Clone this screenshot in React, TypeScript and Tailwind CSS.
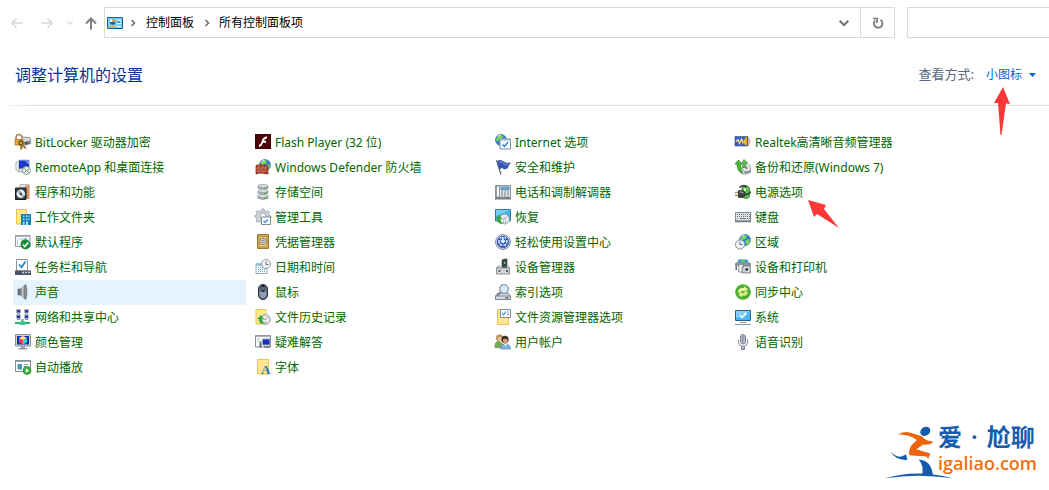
import type { ReactNode } from "react";

type Item = { name: string; icon: ReactNode; active?: boolean; marked?: boolean };

const folder = (
  <>
    <path d="M1 .5h10v14.500H1z" fill="#ffe794" stroke="#eec24c" />
  </>
);

const globe = (
  <>
    <circle cx="10" cy="6" r="5.500" fill="#2f7fd0" stroke="#2560a4" strokeWidth=".6" />
    <path d="M6 3l4-2.300 2 1.600-1 2.500-3 .7-1 2.500-2-2zM11 6l4-1-.6 4L12 11l-2-2.500z" fill="#7bd35a" />
    <path d="M7 2.500l2.500-1.300" stroke="#e8fbff" strokeWidth="1" />
  </>
);

const items: Item[] = [
  {
    name: "BitLocker 驱动器加密",
    icon: (
      <>
        <path d="M1 6V3.500a3 3 0 0 1 6 0V6" fill="none" stroke="#b08a42" strokeWidth="1.600" />
        <path d="M7 3l8 .5 1 6-7 2-3-2z" fill="#d5d5d5" stroke="#777" strokeWidth=".7" />
        <path d="M9 8l6-1v2.500l-5 1.500z" fill="#555" />
        <path d="M13 8.500h1.500" stroke="#5df060" />
        <path d="M0 5.500h8v5.500H0z" fill="#e1a93c" stroke="#a06c1c" strokeWidth=".7" />
        <circle cx="6" cy="9" r="2" fill="none" stroke="#77531d" strokeWidth="1.500" />
        <path d="M6 11v4.500M7 10.500l4 4M6 13.500h2" stroke="#97671e" strokeWidth="1.500" />
      </>
    ),
  },
  {
    name: "Flash Player (32 位)",
    icon: (
      <>
        <path d="M0 0h16v15H0z" fill="#4a0204" />
        <path d="M12 3.500c-3 0-4 2-4.700 4.500C6.500 10.500 6 12 4 12M7.500 7.800H11" fill="none" stroke="#fff" strokeWidth="1.900" />
      </>
    ),
  },
  {
    name: "Internet 选项",
    icon: (
      <>
        <g transform="translate(-4 0)">{globe}</g>
        <path d="M5 5h10.500v10H5z" fill="#f8fbff" stroke="#7990a8" />
        <path d="M5 5.500h10.500" stroke="#9cb0c4" strokeWidth="2" />
        <path d="M7.500 10.500l2 2 3.500-4.500" fill="none" stroke="#2f7fd0" strokeWidth="1.400" />
      </>
    ),
  },
  {
    name: "Realtek高清晰音频管理器",
    icon: (
      <>
        <path d="M0 2.500h13v9.500H0z" fill="#3f5fc0" stroke="#2b4696" strokeWidth=".6" />
        <path d="M1 7.500l2-2 1.500 4L6.500 5 8 9l2-3" fill="none" stroke="#ffe98a" strokeWidth="1.200" />
        <path d="M8.500 6l3.500-3.500v9.500L8.500 9.500z" fill="#f0b644" stroke="#a8711e" strokeWidth=".6" />
        <path d="M13.500 4.500q2.500 3 0 6" fill="none" stroke="#eaa93a" strokeWidth="1.200" />
      </>
    ),
  },
  {
    name: "RemoteApp 和桌面连接",
    icon: (
      <>
        <path d="M1 3h4v8H1z" fill="#f2f2f2" stroke="#a5a5a5" strokeWidth=".8" />
        <path d="M3.500 1h11v9h-11z" fill="#1c35cf" stroke="#c5c5cc" />
        <path d="M9 1.500h5v4z" fill="#6d92f2" />
        <path d="M3 11.500h7v2H2z" fill="#bbb" />
        <circle cx="11.500" cy="11.500" r="4" fill="#eef1f3" stroke="#8d979f" />
        <path d="M9.500 9.500l2 2-2 2M13.500 9.500l-1.500 2 1.500 2" fill="none" stroke="#48a543" />
      </>
    ),
  },
  {
    name: "Windows Defender 防火墙",
    icon: (
      <>
        {globe}
        <path d="M1 6.500l4-1 8 1.500v8l-8-1-4 1z" fill="#a8402c" stroke="#6d2416" strokeWidth=".7" />
        <path d="M1 9h12M1 12h12M4 6v3M8 6v3M11 6.500V9M3 9v3M6 9v3M10 9v3M4 12v3M8 12v3" stroke="#dd8e76" strokeWidth=".6" />
      </>
    ),
  },
  {
    name: "安全和维护",
    icon: (
      <>
        <path d="M1.500 1l4.500 14.500" stroke="#6c7684" strokeWidth="1.400" />
        <path d="M2.500 2.500Q5 0 8 2.500T15.500 4Q13 6 12.500 9 9 11 7 8.500L4.500 10z" fill="#3455b8" stroke="#1f3b91" strokeWidth=".6" />
        <path d="M3.500 3.500Q6 1.500 8 4t5 1" fill="none" stroke="#839ee5" />
      </>
    ),
  },
  {
    name: "备份和还原(Windows 7)",
    icon: (
      <>
        <path d="M6 9l7-1.500 2.500 2v4L9 15.500 5.500 13z" fill="#d5d8da" stroke="#777d82" strokeWidth=".7" />
        <ellipse cx="11.500" cy="9" rx="4" ry="4.300" fill="#e6e9ea" stroke="#858b90" strokeWidth=".7" />
        <circle cx="11.500" cy="9" r="1.300" fill="#8a9298" />
        <path d="M9.500 13.500l5-1" stroke="#5c6368" strokeWidth="1.200" />
        <path d="M8 8.500q-1-2 0-4H6.500L9 .5l3.500 3.500H11q-1 2 0 4.500z" fill="#5cc248" stroke="#227d22" strokeWidth=".6" />
        <path d="M2 5H0L3.500 1 7 5H5.500q-.5 5 2 9.500Q2 12.500 2 5z" fill="#49b838" stroke="#1f7a20" strokeWidth=".7" />
      </>
    ),
  },
  {
    name: "程序和功能",
    icon: (
      <>
        <path d="M5 .5h9v11H4z" fill="#dedede" stroke="#aaa" strokeWidth=".8" />
        <path d="M10 2l4.500-1v14H11z" fill="#d79666" />
        <path d="M.5 4h10.500v11.500H.5z" fill="#353e45" stroke="#151c22" />
        <circle cx="5.800" cy="9.800" r="4.300" fill="#e6edf0" />
        <path d="M5.800 9.800L2 8q1-2 3-2.400zM5.800 9.800l4 1.500q-1 2-3 2.500z" fill="#a4b3bc" />
        <circle cx="5.800" cy="9.800" r="1.300" fill="#323a40" />
      </>
    ),
  },
  {
    name: "存储空间",
    icon: (
      <g fill="#b9bec2" stroke="#82888d" strokeWidth=".7">
        <path d="M3 12v2.300q5 2.300 10 0V12zM3 7v2.300q5 2.300 10 0V7zM3 2v2.300q5 2.300 10 0V2z" />
        <ellipse cx="8" cy="12" rx="5" ry="1.400" fill="#e8eaeb" />
        <ellipse cx="8" cy="7" rx="5" ry="1.400" fill="#e8eaeb" />
        <ellipse cx="8" cy="2" rx="5" ry="1.400" fill="#e8eaeb" />
        <path d="M9.500 4.400h2M9.500 9.400h2M9.500 14.400h2" stroke="#35ad38" strokeWidth="1.300" />
      </g>
    ),
  },
  {
    name: "电话和调制解调器",
    icon: (
      <>
        <path d="M.5 1.500h15v12H.5z" fill="#e3e7ea" stroke="#8a929a" />
        <path d="M1.500 2h3v11h-3z" fill="#fafafa" stroke="#7a838c" strokeWidth=".8" />
        <path d="M6 3h8v3H6z" fill="#6fb0de" stroke="#3b678d" strokeWidth=".6" />
        <path d="M6 8h8M6 10h8M6 12h8" stroke="#75808b" strokeDasharray="2 1" />
        <path d="M0 13.500h16v2H0z" fill="#737d87" />
      </>
    ),
  },
  {
    name: "电源选项",
    marked: true,
    icon: (
      <>
        <path d="M8.500 1.500h3.500v1q2.500.3 2.500 2v7.500q0 2-3.500 2.500-4-.5-4-2.500v-7.500q0-1.700 1.500-2z" fill="#5fc04f" stroke="#2b7a2a" strokeWidth=".8" />
        <path d="M9 4h2v3H9z" fill="#d9f6cd" />
        <path d="M4.500 3.500Q8 0 11.500 3.500M11 10.500q3.500 0 4.500-3" fill="none" stroke="#2f3633" strokeWidth="1.400" />
        <path d="M0 8.500h4M0 11.500h4" stroke="#a08e62" strokeWidth="1.300" />
        <path d="M3.500 6.500H7q3.500 1 3.500 3.500T7 13.500H3.500z" fill="#3b4144" stroke="#16191b" strokeWidth=".6" />
        <path d="M4.500 8H7l1.500 1.200" fill="none" stroke="#c5cacc" />
      </>
    ),
  },
  {
    name: "工作文件夹",
    icon: (
      <>
        <path d="M1.500.5h10v14.500h-10z" fill="#ffe794" stroke="#eec24c" />
        <path d="M6 5h10v11H6z" fill="#1681b8" />
        <path d="M8 6.500h1.500V8H8zM11 6.500h1.500V8H11zM13.500 6.500h1V8h-1zM8 9.500h1.500V11H8zM11 9.500h1.500V11H11zM13.500 9.500h1V11h-1zM8 12.500h1.500V16H8zM11 12.500h2V16h-2z" fill="#a8e3fb" />
      </>
    ),
  },
  {
    name: "管理工具",
    icon: (
      <>
        <path d="M7 0h2l.5 2 2 .7L13 1.500 14.500 3l-1 1.500.7 2 1.800.5v2l-2 .5-2 3-4 2.500H6.500l-.5-2-2-.7-1.500 1L1 12l1-1.700-.7-1.800L0 8V6.500L1.500 6l.7-2-1-1.500 1.500-1L4 2.500 6.500 2z" fill="#cfd4d8" stroke="#8a939a" strokeWidth=".7" />
        <circle cx="8" cy="7" r="3" fill="#fff" stroke="#8c949b" strokeWidth=".8" />
        <path d="M6.500 8h9v7.500h-9z" fill="#fff" stroke="#808890" />
        <path d="M8.500 12l1.500 1.500 3-3" fill="none" stroke="#2f87cf" strokeWidth="1.200" />
      </>
    ),
  },
  {
    name: "恢复",
    icon: (
      <>
        <path d="M.5.5h15V12H.5z" fill="#76cdf7" stroke="#277cae" />
        <path d="M1 7l14-6v10H1z" fill="#48b1ec" />
        <circle cx="9.500" cy="10" r="5" fill="#e7eaec" stroke="#818a90" strokeWidth=".8" />
        <path d="M9.500 10l3-3M9.500 10h-3M8 13h3" stroke="#626b72" strokeDasharray="1 1" />
        <path d="M6.500 15Q1.500 14 2 9.500H.5L4 6l3 3.500H5.500q-.5 3.500 3 5.500z" fill="#35a33c" />
      </>
    ),
  },
  {
    name: "键盘",
    icon: (
      <>
        <path d="M.5 3.500h15v8.500H.5z" fill="#dfe2e4" stroke="#858c94" />
        <path d="M0 12.500h16" stroke="#6f7780" strokeWidth="1.500" />
        <path d="M2 5.500h13M2 7.500h13M2 9.500h2M12 9.500h3" stroke="#6f7780" strokeDasharray="1 1" />
        <path d="M5 9.500h6" stroke="#6f7780" />
      </>
    ),
  },
  {
    name: "默认程序",
    icon: (
      <>
        <path d="M.5 1.500h14.500v11H.5z" fill="#fff" stroke="#8c949b" />
        <path d="M.5 2h14.500" stroke="#9ba2a8" strokeWidth="1.500" />
        <path d="M2.500 5v6M4 5h4" stroke="#a8cce2" />
        <path d="M6 8l5-4v3" fill="none" stroke="#4f9bd0" />
        <circle cx="10.500" cy="10.500" r="5" fill="#168a38" />
        <path d="M7.800 10.500l2 2 3.500-4" fill="none" stroke="#fff" strokeWidth="1.600" />
      </>
    ),
  },
  {
    name: "凭据管理器",
    icon: (
      <>
        <path d="M2.500.5h11v14h-11z" fill="#d0a955" stroke="#9b7830" />
        <path d="M4 2.500h8V13H4z" fill="#e5ca85" stroke="#b38a3a" strokeWidth=".8" />
        <circle cx="8" cy="7.500" r="3.200" fill="#efece0" stroke="#766543" strokeWidth=".8" />
        <circle cx="8" cy="7.500" r="1.400" fill="none" stroke="#66604f" strokeWidth=".8" />
      </>
    ),
  },
  {
    name: "轻松使用设置中心",
    icon: (
      <>
        <circle cx="8" cy="8" r="7.400" fill="#dbe4ef" stroke="#7886a2" />
        <circle cx="8" cy="8" r="5.800" fill="#2d5ec4" stroke="#1c3f9c" strokeWidth=".6" />
        <path d="M4 6Q4 11.500 8 11.500T12 6" fill="none" stroke="#fff" strokeWidth="1.300" strokeDasharray="3 1" />
        <path d="M8 3v5M6 6.500L8 8.500l2-2M5 4h1.500M9.500 4H11" fill="none" stroke="#fff" strokeWidth="1.400" />
      </>
    ),
  },
  {
    name: "区域",
    icon: (
      <>
        {globe}
        <circle cx="5" cy="10.500" r="4.600" fill="#edf3f7" stroke="#84939f" />
        <path d="M5 7.500v3h2.500" fill="none" stroke="#50687a" />
      </>
    ),
  },
  {
    name: "任务栏和导航",
    icon: (
      <>
        <path d="M1.500.5h11V12h-11z" fill="#fff" stroke="#8894a2" />
        <path d="M4 5.500l2.500 3 4-6" fill="none" stroke="#1683cf" strokeWidth="1.600" />
        <path d="M0 11.500h16V16H0z" fill="#4a5668" />
        <path d="M7 13.500h8" stroke="#c7d1da" strokeWidth="1.500" strokeDasharray="2 1" />
      </>
    ),
  },
  {
    name: "日期和时间",
    icon: (
      <>
        <path d="M1 5h11v9.500H1z" fill="#f6fbfd" stroke="#9aaab4" />
        <path d="M1 5.500h11" stroke="#8dbfcd" strokeWidth="2.500" />
        <path d="M3 8.500h8M3 10.500h8M3 12.500h8" stroke="#6badc2" strokeDasharray="1 1" />
        <circle cx="11" cy="5" r="4.500" fill="#f0f2f3" stroke="#919aa0" />
        <path d="M11 2.500V5.500h2.500" fill="none" stroke="#606d77" />
      </>
    ),
  },
  {
    name: "设备管理器",
    icon: (
      <>
        <path d="M7 1l3-1h2v9H7z" fill="#3f484c" stroke="#252b2e" strokeWidth=".6" />
        <path d="M9 3h1.500v2H9z" fill="#50dc58" />
        <path d="M3 7h10l1.500 2h-13z" fill="#eef0f1" stroke="#858b8f" strokeWidth=".7" />
        <path d="M7 5h5v4H7z" fill="#3f484c" />
        <path d="M1.500 9h13v6h-13z" fill="#d3d7da" stroke="#8a9095" />
        <path d="M3.500 12h2M11 12h2" stroke="#343a3d" strokeWidth="1.500" />
      </>
    ),
  },
  {
    name: "设备和打印机",
    icon: (
      <>
        <path d="M3.500.5h9l1 3.500h-11z" fill="#2b9cdd" />
        <path d="M6.500.5h3V4h-3z" fill="#6fd04f" />
        <path d="M0 4.500L2 3h12l2 1.500V7H0z" fill="#8b9298" />
        <path d="M.5 7h1.500v4H.5z" fill="#646b71" />
        <path d="M4 5.500h4.500V13H3.500z" fill="#f4f6f7" stroke="#6f767c" strokeWidth=".7" />
        <path d="M7 7.500h2L10 6.500h3l.7 1h1.800V14H7z" fill="#c5cace" stroke="#666d73" strokeWidth=".7" />
        <circle cx="11.800" cy="10.500" r="2.200" fill="#42505a" stroke="#fff" strokeWidth=".9" />
      </>
    ),
  },
  {
    name: "声音",
    active: true,
    icon: (
      <>
        <path d="M3 5h3v6H3z" fill="#747d84" stroke="#555f67" strokeWidth=".7" />
        <path d="M6 5l4.500-4.500v15L6 11z" fill="#bac0c4" stroke="#737b80" strokeWidth=".7" />
        <ellipse cx="10.500" cy="8" rx="1.400" ry="7.300" fill="#858c91" stroke="#62696e" strokeWidth=".6" />
      </>
    ),
  },
  {
    name: "鼠标",
    icon: (
      <>
        <rect x="3.500" y=".5" width="9" height="15" rx="4.400" fill="#5c6877" stroke="#232b36" />
        <path d="M4.500 7q3.500 2 7 0v4q-1 3-3.500 3t-3.500-3z" fill="#8f9eb0" />
        <path d="M8 1v7" stroke="#1a2431" strokeWidth="2.600" />
        <path d="M8 3v3.500" stroke="#9aabc0" strokeWidth="1" />
      </>
    ),
  },
  {
    name: "索引选项",
    icon: (
      <>
        <path d="M3 9h10l2.500 3v3.500H.5V12z" fill="#d7dbdf" stroke="#737b83" strokeWidth=".9" />
        <path d="M.5 12h15" stroke="#737b83" strokeWidth=".8" />
        <path d="M10.500 13.800h3" stroke="#424b52" strokeWidth="1.200" />
        <path d="M6 8l-4 4" stroke="#7d8993" strokeWidth="2" />
        <circle cx="9" cy="5" r="4.300" fill="#d6ecfa" stroke="#8198a9" strokeWidth="1.200" />
      </>
    ),
  },
  {
    name: "同步中心",
    icon: (
      <>
        <circle cx="8" cy="8" r="7.800" fill="#4bb035" />
        <path d="M3 8.500Q3 4 7.500 4H9V2l4 3.500L9 9V7Q6 6.500 6 9.500z" fill="#f4f5a5" />
        <path d="M13 7.500Q13 12 8.500 12H7v2L3 10.500 7 7v2q3 .5 3-2.500z" fill="#e0ee84" stroke="#4bb035" strokeWidth=".6" />
      </>
    ),
  },
  {
    name: "网络和共享中心",
    icon: (
      <>
        <path d="M1.500.5h4v3.500h-4zM9.500.5h4v3.500h-4zM1.500 6h4v3.500h-4zM9.500 6h4v3.500h-4z" fill="#2438a8" stroke="#b4b9c5" />
        <path d="M2 5h3M10 5h3M2 10.500h3M10 10.500h3" stroke="#858c9b" />
        <path d="M7.500 10V13M0 14h15" stroke="#25b678" strokeWidth="2" />
        <path d="M4.500 12.500h6V16h-6z" fill="#37c98a" />
      </>
    ),
  },
  {
    name: "文件历史记录",
    icon: (
      <>
        {folder}
        <circle cx="10.500" cy="10.500" r="4.800" fill="#e8ebed" stroke="#868e93" strokeWidth=".9" />
        <path d="M10.500 10.500l2.500-2.500M10.500 10.500H8M8.500 13.500h4" stroke="#67717a" strokeDasharray="1 1" />
        <path d="M7 15Q3.500 14 4 10H2l4-4 3 4H7q0 2.500 2 4z" fill="#36a936" />
      </>
    ),
  },
  {
    name: "文件资源管理器选项",
    icon: (
      <>
        <path d="M2.500.5h11v15h-11z" fill="#ffe794" stroke="#eec24c" />
        <path d="M5.500.5h10v8h-10z" fill="#fff" stroke="#808a93" />
        <path d="M7 4l1.500 2 2.500-3.500" fill="none" stroke="#2d8edc" strokeWidth="1.200" />
        <path d="M12 3h2M12 5.500h2" stroke="#888" />
      </>
    ),
  },
  {
    name: "系统",
    icon: (
      <>
        <path d="M.5 1.500h15v10H.5z" fill="#48b6f5" stroke="#2e6187" />
        <path d="M1 2h14L1 9z" fill="#83d0fa" />
        <path d="M5 6.500l2 2L11.500 4" fill="none" stroke="#fff" strokeWidth="1.800" />
        <path d="M5 13.500h6M0 15.500h16" stroke="#8d9aa8" strokeWidth="1" />
      </>
    ),
  },
  {
    name: "颜色管理",
    icon: (
      <>
        <path d="M.5.5h15V12H.5z" fill="#cdd2d5" stroke="#899197" />
        <path d="M2 2h12v8.500H2z" fill="#102bbd" />
        <path d="M4 4l4-2v8.500l-4-2z" fill="#f13b61" />
        <path d="M8 2l4 2-4 2-4-2z" fill="#fff27a" />
        <path d="M8 6l4-2v4.500l-4 2z" fill="#33d4c9" />
        <path d="M6 12h4v2H6zM3.500 14h9v1.500h-9z" fill="#969da2" />
      </>
    ),
  },
  {
    name: "疑难解答",
    icon: (
      <>
        <path d="M.5 1.500h15v11.500H.5z" fill="#f7f8f9" stroke="#888f96" />
        <path d="M.5 2h15" stroke="#979da4" strokeWidth="1.500" />
        <path d="M2 5h3M2 7h2" stroke="#c1c5c9" />
        <path d="M7.500 5h7.500v6H7.500z" fill="#1832bc" stroke="#9ca6b8" />
        <path d="M9 13h6" stroke="#7e8791" strokeWidth="2" />
        <path d="M4.500 7.500h2v6h-2z" fill="#5c656c" />
        <path d="M5 9h1.200" stroke="#4bea58" />
      </>
    ),
  },
  {
    name: "用户帐户",
    icon: (
      <>
        <circle cx="4.500" cy="4" r="3.400" fill="#bd8b55" />
        <path d="M3 3h4v3.500L5 8 3 6z" fill="#f1c9a0" />
        <path d="M0 12q0-4.500 4-4.500L9 11v2.500H0z" fill="#7cab57" stroke="#547b36" strokeWidth=".6" />
        <circle cx="10" cy="5.500" r="3.700" fill="#483328" />
        <path d="M8 5h4.500v3.500L10.500 10 8 8z" fill="#d99c70" />
        <path d="M5.500 15q0-5 4.500-5 5.500 0 5.500 5z" fill="#85b6df" stroke="#4d7aa3" strokeWidth=".6" />
        <path d="M9 10l1.500 2 1.500-2" fill="#fff" />
      </>
    ),
  },
  {
    name: "语音识别",
    icon: (
      <>
        <rect x="5.500" y=".5" width="5" height="9.500" rx="2.500" fill="#e9ebf2" stroke="#777d98" />
        <path d="M5.500 3h5M5.500 5h5M5.500 7h5M8 1v9" stroke="#777d98" strokeWidth=".9" />
        <path d="M3.500 5.500v3Q4 12 8 12t4.500-3.500v-3" fill="none" stroke="#9499ae" strokeWidth="1.200" />
        <path d="M8 12v3.500M6.500 12.500v3h3v-3" fill="none" stroke="#777d98" />
      </>
    ),
  },
  {
    name: "自动播放",
    icon: (
      <>
        <path d="M.5 1.500h15v11H.5z" fill="#fff" stroke="#858d94" />
        <path d="M.5 2h15" stroke="#858d94" strokeWidth="1.500" />
        <path d="M2.500 5H7v5.500H2.500z" fill="#4994b4" />
        <path d="M8.500 5.500h5M8.500 7.500h3" stroke="#a7adb2" />
        <circle cx="12" cy="11.500" r="4" fill="#3fac3d" stroke="#2b812b" strokeWidth=".6" />
        <path d="M10.800 9.300l3.200 2.200-3.200 2.200z" fill="#fff" />
      </>
    ),
  },
  {
    name: "字体",
    icon: (
      <>
        <path d="M2.500.5h11v14.500h-11z" fill="#ffe794" stroke="#eec24c" />
        <text x="6" y="15" fontFamily="Liberation Serif, serif" fontSize="13" fontWeight="bold" fill="#1975b5">
          A
        </text>
      </>
    ),
  },
];

function Chevron({ down = false, color = "#6d6d6d", size = 8 }: { down?: boolean; color?: string; size?: number }) {
  return (
    <svg width={size} height={size} viewBox="0 0 8 8" fill="none" stroke={color} strokeWidth="1.600">
      <path d={down ? "M.5 2.200l3.500 3.500 3.500-3.500" : "M2.500 1l3 3-3 3"} />
    </svg>
  );
}

function Toolbar() {
  return (
    <div className="flex items-stretch pt-[7px] pl-[2px]">
      <button aria-label="后退" className="flex w-[30px] items-center justify-center">
        <svg width="14" height="14" viewBox="0 0 14 14" fill="none" stroke="#d9d9d9" strokeWidth="1.600">
          <path d="M13 7H2M6.500 2.500L2 7l4.500 4.500" />
        </svg>
      </button>
      <button aria-label="前进" className="flex w-[30px] items-center justify-center">
        <svg width="14" height="14" viewBox="0 0 14 14" fill="none" stroke="#d9d9d9" strokeWidth="1.600">
          <path d="M1 7h11M7.500 2.500L12 7l-4.500 4.500" />
        </svg>
      </button>
      <button aria-label="最近浏览的位置" className="flex w-4 items-center justify-center">
        <Chevron down color="#d4d4d4" size={6} />
      </button>
      <button aria-label="上移" className="flex w-[26px] items-center justify-center">
        <svg width="14" height="14" viewBox="0 0 14 14" fill="none" stroke="#808080" strokeWidth="2">
          <path d="M7 13.500V2.500M2 7.500l5-5 5 5" />
        </svg>
      </button>
      <div className="flex h-[31px] min-w-0 flex-1 border border-[#d9d9d9]">
        <nav className="flex min-w-0 flex-1 items-center pl-[2px] text-black">
          <svg width="16" height="12" viewBox="0 0 16 12">
            <path d="M.5.5h15v11H.5z" fill="#7ccdf6" stroke="#15618c" />
            <circle cx="5.500" cy="5" r="2.700" fill="#fff" />
            <path d="M5.500 5V2.200A2.800 2.800 0 1 1 2.800 5z" fill="#1463a6" />
            <path d="M5.500 5V2.200A2.800 2.800 0 0 1 8.300 5z" fill="#f6a623" />
            <path d="M10 3.500h4M10 6.500h4" stroke="#fff" />
            <path d="M10 5h3" stroke="#1674ad" />
            <path d="M2.500 9.500h5" stroke="#f6a623" />
            <path d="M9.500 9.500h4" stroke="#fff" />
          </svg>
          <span className="flex w-5 justify-center">
            <Chevron />
          </span>
          <a href="#panel" className="px-[3px]">
            控制面板
          </a>
          <span className="flex w-5 justify-center">
            <Chevron />
          </span>
          <a href="#all" className="px-[2px]">
            所有控制面板项
          </a>
        </nav>
        <button aria-label="以前的位置" className="flex w-8 items-center justify-center">
          <Chevron down size={10} />
        </button>
        <button aria-label="刷新" className="flex w-[34px] items-center justify-center border-l border-[#d9d9d9]">
          <svg width="12" height="12" viewBox="0 0 12 12" fill="none" stroke="#757575" strokeWidth="1.700">
            <path d="M8.500 2.800A4.300 4.300 0 1 1 3 3.500M1 1.500h4V6" />
          </svg>
        </button>
      </div>
      <input aria-label="搜索控制面板" className="ml-3 w-[142px] border border-r-0 border-[#d9d9d9] px-2 outline-none" />
    </div>
  );
}

function Header() {
  return (
    <header className="flex items-center justify-between pt-[25px] pr-[13px] pb-[18px] pl-[15px]">
      <h1 className="text-base leading-6 text-[#003399]">调整计算机的设置</h1>
      <div className="flex items-center gap-3">
        <label htmlFor="view" className="text-[13px] text-[#5a6780]">
          查看方式:
        </label>
        <div className="relative flex items-center gap-[6px] text-[#0066cc]">
          <select id="view" defaultValue="小图标" className="appearance-none bg-transparent">
            <option>类别</option>
            <option>大图标</option>
            <option>小图标</option>
          </select>
          <svg width="7" height="4" viewBox="0 0 7 4" fill="currentColor">
            <path d="M0 0h7L3.500 4z" />
          </svg>
          <svg className="absolute top-full left-2 mt-1" width="16" height="48" viewBox="0 0 16 48" fill="#fc3736">
            <path d="M9 0l7 17-4-.5L7.500 48h-1L4 16H0z" />
          </svg>
        </div>
      </div>
    </header>
  );
}

function PanelItem({ item }: { item: Item }) {
  return (
    <li className="relative mr-[7px]">
      <a
        href="#item"
        className={`flex gap-1 pt-1 pr-1 pb-[3px] pl-[2px] leading-[18px] whitespace-nowrap ${item.active ? "bg-[#e5f3ff]" : "hover:bg-[#e5f3ff]"}`}
      >
        <svg className="shrink-0 overflow-visible" width="16" height="16" viewBox="0 0 16 16">
          {item.icon}
        </svg>
        {item.name}
      </a>
      {item.marked && (
        <svg className="absolute top-5 left-[75px]" width="31" height="28" viewBox="0 0 31 28" fill="#fc3736">
          <path d="M0 0l18 5-2 4 15 19L9 14l-3 3z" />
        </svg>
      )}
    </li>
  );
}

function Logo() {
  return (
    <div className="flex items-end">
      <svg className="-mr-4" width="70" height="53" viewBox="42 45 210 160">
        <ellipse cx="166" cy="61" rx="16" ry="13" fill="#155cae" transform="rotate(-35 166 61)" />
        <path d="M84 71Q98 59 122 65L156 76Q165 91 190 92 182 104 160 101L139 115 181 128 175 144 169 137 118 133Q115 120 124 103L141 87Q117 71 84 71z" fill="#e9640c" />
        <path d="M60 122Q76 138 92 138L108 131 112 147Q78 150 60 122z" fill="#155cae" />
        <path d="M146 147Q184 148 189 194H156Q163 165 146 147z" fill="#155cae" />
        <path d="M45 203Q140 174 250 203 140 187 45 203z" fill="#155cae" />
      </svg>
      <div className="pb-1 font-semibold">
        <div className="flex gap-[9px] text-2xl leading-7 text-[#155cae]">
          爱<span>·</span>尬聊
        </div>
        <div className="font-['Open_Sans',sans-serif] text-lg leading-6 text-[#f0700f]">igaliao.com</div>
      </div>
    </div>
  );
}

export default function App() {
  return (
    <div className="min-h-screen bg-white font-['Noto_Sans','Noto_Sans_CJK_SC',sans-serif] text-xs">
      <Toolbar />
      <Header />
      <div className="h-px bg-linear-to-r from-white to-[#d5e1ee] to-[32px]" />
      <main className="pt-6 pl-[13px]">
        <ul className="grid grid-cols-[repeat(auto-fill,240px)] text-[#006600]">
          {items.map((item) => (
            <PanelItem key={item.name} item={item} />
          ))}
        </ul>
      </main>
      <footer className="flex justify-end pt-[43px] pr-3">
        <Logo />
      </footer>
    </div>
  );
}
